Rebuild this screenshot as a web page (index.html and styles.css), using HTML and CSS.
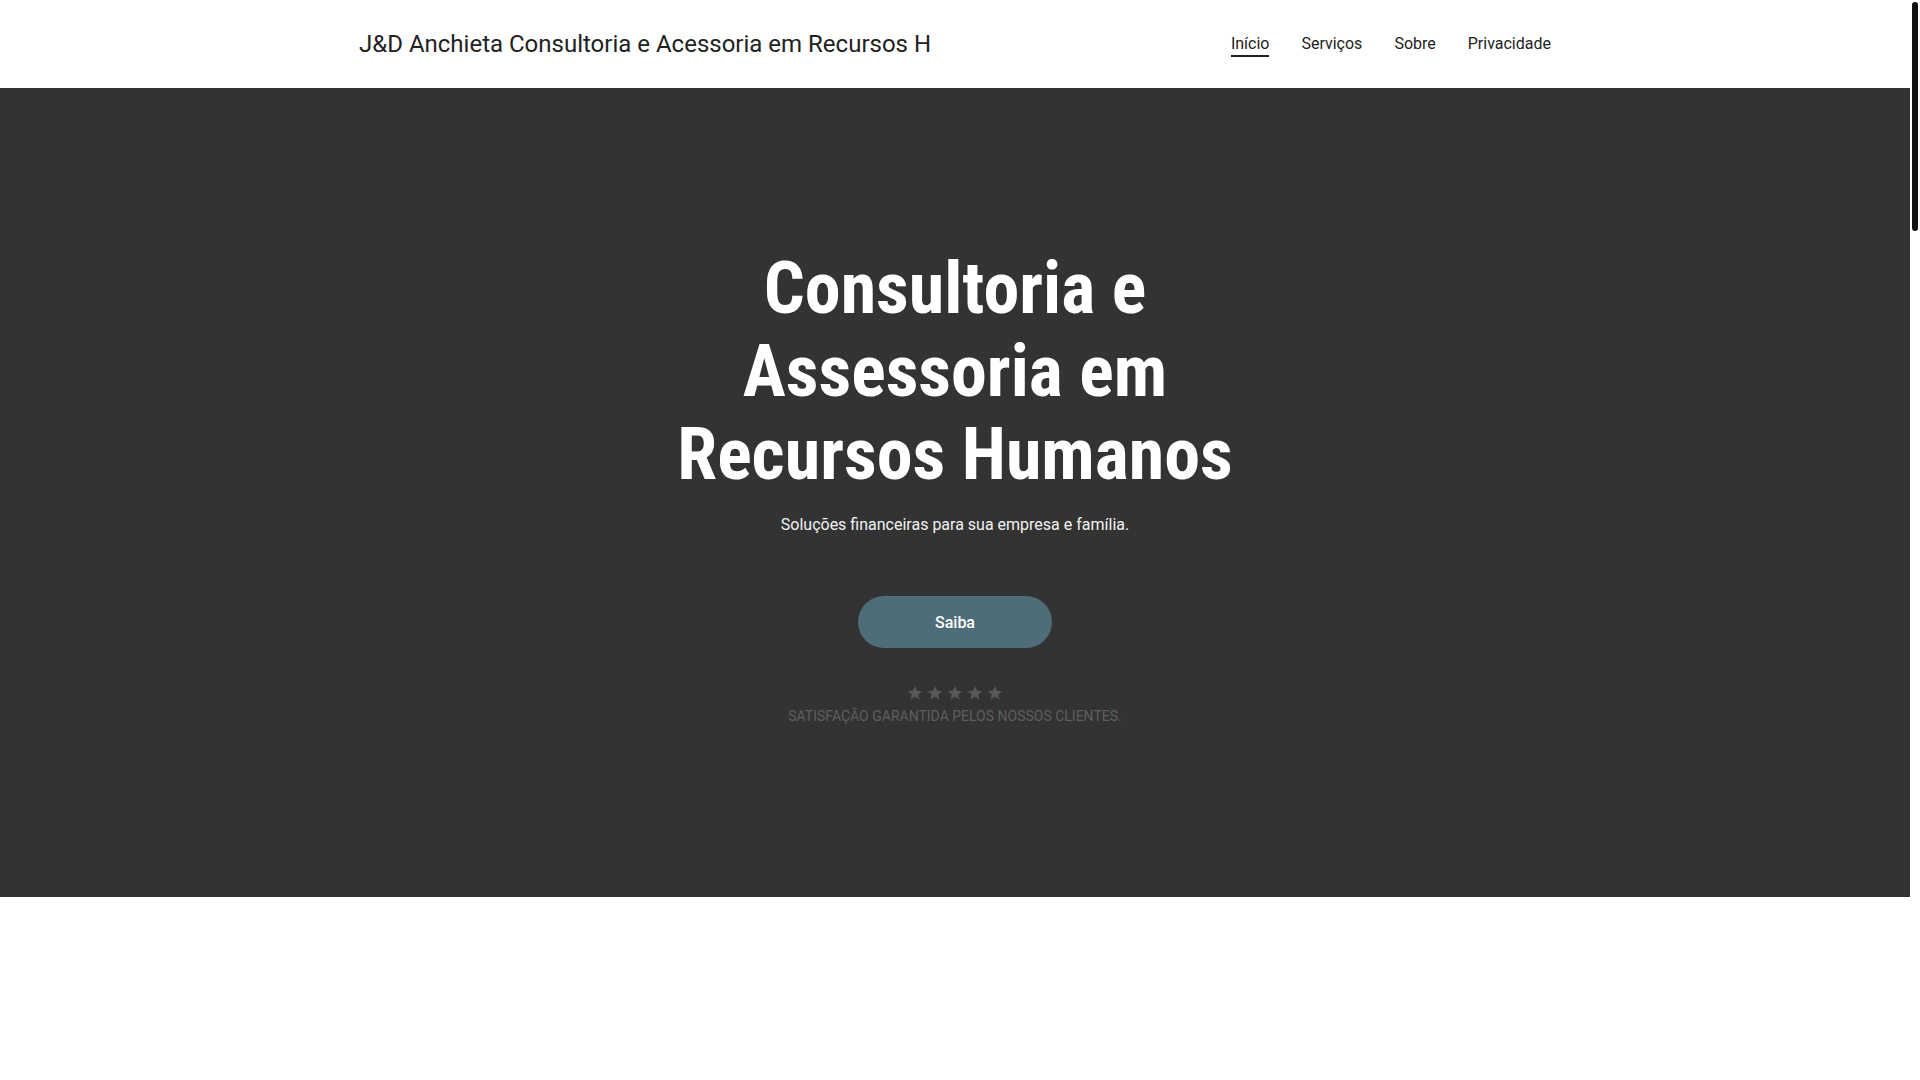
FILE: index.html
```html
<!DOCTYPE html>
<html lang="pt-BR">
<head>
<meta charset="utf-8">
<title>J&amp;D Anchieta Consultoria e Acessoria em Recursos Humanos</title>
<link rel="stylesheet" href="styles.css">
</head>
<body>
<div class="page">
  <header class="site-header">
    <div class="header-inner">
      <a class="brand" href="#">J&amp;D Anchieta Consultoria e Acessoria em Recursos H</a>
      <nav class="main-nav">
        <a class="nav-link active" href="#">Início</a>
        <a class="nav-link" href="#">Serviços</a>
        <a class="nav-link" href="#">Sobre</a>
        <a class="nav-link" href="#">Privacidade</a>
      </nav>
    </div>
  </header>
  <section class="hero">
    <h1 class="hero-title">Consultoria e Assessoria em Recursos Humanos</h1>
    <p class="hero-sub">Soluções financeiras para sua empresa e família.</p>
    <a class="hero-btn" href="#">Saiba</a>
    <div class="stars">
      <svg viewBox="0 0 24 24" class="star"><path d="M12 1.5l3.1 7.1 7.7.6-5.9 5 1.8 7.5L12 17.7l-6.7 4 1.8-7.5-5.9-5 7.7-.6z"/></svg>
      <svg viewBox="0 0 24 24" class="star"><path d="M12 1.5l3.1 7.1 7.7.6-5.9 5 1.8 7.5L12 17.7l-6.7 4 1.8-7.5-5.9-5 7.7-.6z"/></svg>
      <svg viewBox="0 0 24 24" class="star"><path d="M12 1.5l3.1 7.1 7.7.6-5.9 5 1.8 7.5L12 17.7l-6.7 4 1.8-7.5-5.9-5 7.7-.6z"/></svg>
      <svg viewBox="0 0 24 24" class="star"><path d="M12 1.5l3.1 7.1 7.7.6-5.9 5 1.8 7.5L12 17.7l-6.7 4 1.8-7.5-5.9-5 7.7-.6z"/></svg>
      <svg viewBox="0 0 24 24" class="star"><path d="M12 1.5l3.1 7.1 7.7.6-5.9 5 1.8 7.5L12 17.7l-6.7 4 1.8-7.5-5.9-5 7.7-.6z"/></svg>
    </div>
    <p class="guarantee">Satisfação garantida pelos nossos clientes.</p>
  </section>
</div>
<div class="scrollbar"><div class="scroll-thumb"></div></div>
</body>
</html>
```

FILE: styles.css
```css
html,
body {
  height: 100%;
}
body {
  margin: 0;
  display: flex;
  overflow: hidden;
  font-family: Roboto, "Liberation Sans", Arial, sans-serif;
  color: #222222;
  background: #ffffff;
}
a {
  text-decoration: none;
  color: inherit;
}
.page {
  flex: 1;
  min-width: 0;
}
.scrollbar {
  width: 10px;
  flex: none;
  background: #ffffff;
}
.scroll-thumb {
  width: 6px;
  height: 229px;
  margin: 2px 2px 0 2px;
  border-radius: 3px;
  background: #111111;
}
.site-header {
  height: 88px;
  background: #ffffff;
}
.header-inner {
  width: 1192px;
  height: 100%;
  margin: 0 auto;
  display: flex;
  align-items: center;
  justify-content: space-between;
}
.brand {
  font-size: 24px;
  line-height: 30px;
  color: #222222;
  white-space: nowrap;
}
.main-nav {
  display: flex;
  gap: 32px;
  align-items: center;
}
.nav-link {
  font-size: 16px;
  line-height: 22px;
  color: #222222;
  padding: 2px 0 0;
  border-bottom: 2px solid transparent;
}
.nav-link.active {
  border-bottom-color: #222222;
}
.hero {
  height: 809px;
  box-sizing: border-box;
  padding-top: 159px;
  background: #333333;
  display: flex;
  flex-direction: column;
  align-items: center;
  text-align: center;
}
.hero-title {
  margin: 0;
  max-width: 700px;
  font-family: "Roboto Condensed", Roboto, "Liberation Sans", sans-serif;
  font-size: 72px;
  line-height: 83px;
  font-weight: 700;
  color: #ffffff;
}
.hero-sub {
  margin: 17px 0 0;
  font-size: 16px;
  line-height: 24px;
  color: #f2f2f2;
}
.hero-btn {
  margin-top: 59px;
  width: 194px;
  height: 52px;
  border-radius: 26px;
  background: #4e6d78;
  color: #ffffff;
  font-size: 16px;
  font-weight: 500;
  display: flex;
  align-items: center;
  justify-content: center;
}
.stars {
  margin-top: 37px;
  display: flex;
  gap: 4px;
  height: 16px;
}
.star {
  width: 16px;
  height: 16px;
  fill: #585858;
}
.guarantee {
  margin: 5px 0 0;
  font-size: 14px;
  line-height: 20px;
  text-transform: uppercase;
  color: #5e5e5e;
}
```
